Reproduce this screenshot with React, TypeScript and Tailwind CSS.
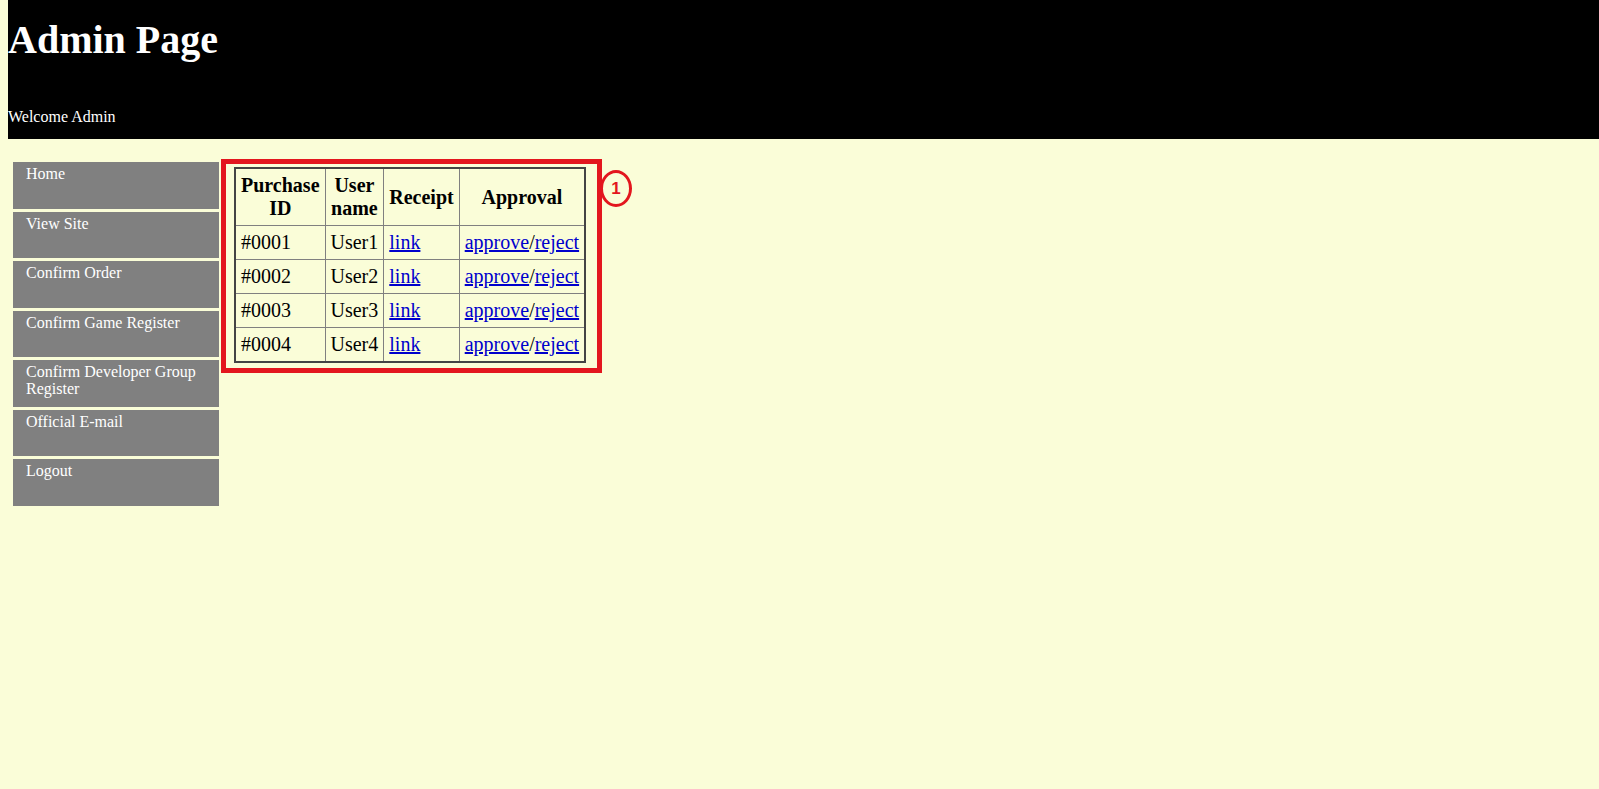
const MENU = [
  "Home",
  "View Site",
  "Confirm Order",
  "Confirm Game Register",
  "Confirm Developer Group Register",
  "Official E-mail",
  "Logout",
];

const ROWS = [
  { id: "#0001", user: "User1" },
  { id: "#0002", user: "User2" },
  { id: "#0003", user: "User3" },
  { id: "#0004", user: "User4" },
];

const serif = "font-['Liberation_Serif','Times_New_Roman',serif]";
const cell = "border border-[#808080] px-[5px] py-[5px]";

export default function App() {
  return (
    <div className={`min-h-screen bg-[#fafdd8] ${serif}`}>
      <header className="ml-[8px] h-[139px] bg-black text-white">
        <h1 className="pt-[17px] text-[40px] leading-[46px] font-bold">Admin Page</h1>
        <p className="mt-[45px] text-[16px] leading-[18px]">Welcome Admin</p>
      </header>

      <div className="flex items-start pt-[20px] pl-[13px]">
        <nav className="mt-[3px] flex w-[206px] flex-col gap-[3px]">
          {MENU.map((item) => (
            <a
              key={item}
              href="#"
              className="h-[46.5px] bg-[#808080] pl-[13px] pr-[6px] pt-[3px] text-[16px] leading-[17px] text-white"
            >
              {item}
            </a>
          ))}
        </nav>

        <div className="relative ml-[2px] border-[5px] border-[#e3161e] pt-[3px] pl-[8px] pr-[11px] pb-[5px]">
          <table className="border-collapse border-2 border-[#444] text-[20px] leading-[23px] text-black">
            <thead>
              <tr>
                <th className={cell}>Purchase<br />ID</th>
                <th className={cell}>User<br />name</th>
                <th className={cell}>Receipt</th>
                <th className={cell}>Approval</th>
              </tr>
            </thead>
            <tbody>
              {ROWS.map((r) => (
                <tr key={r.id}>
                  <td className={cell}>{r.id}</td>
                  <td className={cell}>{r.user}</td>
                  <td className={cell}>
                    <a href="#" className="text-[#0000cc] underline">link</a>
                  </td>
                  <td className={`${cell} whitespace-nowrap`}>
                    <a href="#" className="text-[#0000cc] underline">approve</a>/
                    <a href="#" className="text-[#0000cc] underline">reject</a>
                  </td>
                </tr>
              ))}
            </tbody>
          </table>

          <div className="absolute left-[calc(100%+3px)] top-[6px] flex h-[37px] w-[32px] items-center justify-center rounded-[50%] border-[3px] border-[#e3161e] font-['Liberation_Sans',Arial,sans-serif] text-[17px] font-bold text-[#e3161e]">
            1
          </div>
        </div>
      </div>
    </div>
  );
}
